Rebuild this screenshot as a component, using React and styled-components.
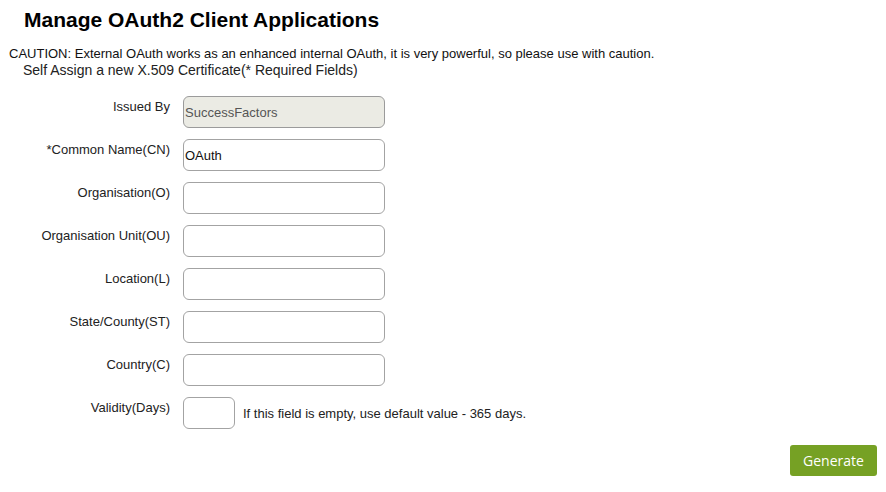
import React from "react";
import styled, { createGlobalStyle } from "styled-components";

const Global = createGlobalStyle`
  html, body { margin: 0; padding: 0; background: #fff; }
  body { font-family: Arial, "Liberation Sans", sans-serif; color: #222; }
`;

const Page = styled.div`
  width: 886px;
  height: 492px;
  box-sizing: border-box;
  padding-top: 8px;
  display: flex;
  flex-direction: column;
`;

const Title = styled.h1`
  margin: 0 0 14px 24px;
  font-size: 21px;
  line-height: 24px;
  font-weight: bold;
  color: #000;
`;

const Caution = styled.div`
  margin-left: 9px;
  font-size: 13px;
  line-height: 15px;
  color: #111;
`;

const Subtitle = styled.div`
  margin: 1px 0 0 23px;
  font-size: 14px;
  line-height: 16px;
  color: #222;
`;

const Form = styled.div`
  margin-top: 18px;
  display: grid;
  grid-template-columns: 170px auto;
  column-gap: 13px;
  row-gap: 11px;
  align-items: start;
`;

const Label = styled.div`
  text-align: right;
  font-size: 13px;
  line-height: 15px;
  padding-top: 3px;
  color: #222;
`;

const FieldCell = styled.div`
  display: flex;
  align-items: center;
  gap: 8px;
`;

const Input = styled.div`
  box-sizing: border-box;
  width: ${(p) => (p.$small ? "52px" : "202px")};
  height: 32px;
  border: 1px solid ${(p) => (p.$disabled ? "#9b9b9b" : "#a3a3a3")};
  border-radius: 6px;
  background: ${(p) => (p.$disabled ? "#ebebe4" : "#fff")};
  color: ${(p) => (p.$disabled ? "#555" : "#111")};
  font-size: 13px;
  line-height: 30px;
  padding: 1px 1px 0;
`;

const Hint = styled.span`
  font-size: 13px;
  color: #222;
  padding-top: 1px;
`;

const Footer = styled.div`
  display: flex;
  justify-content: flex-end;
  padding-right: 9px;
  margin-top: 16px;
`;

const Button = styled.button`
  width: 87px;
  height: 31px;
  border: none;
  border-radius: 3px;
  background: #76a124;
  color: #fff;
  font-family: "Open Sans", sans-serif;
  font-size: 14px;
  padding: 0;
`;

const rows = [
  { label: "Issued By", value: "SuccessFactors", disabled: true },
  { label: "*Common Name(CN)", value: "OAuth" },
  { label: "Organisation(O)", value: "" },
  { label: "Organisation Unit(OU)", value: "" },
  { label: "Location(L)", value: "" },
  { label: "State/County(ST)", value: "" },
  { label: "Country(C)", value: "" },
];

export default function App() {
  return (
    <Page>
      <Global />
      <Title>Manage OAuth2 Client Applications</Title>
      <Caution>
        CAUTION: External OAuth works as an enhanced internal OAuth, it is very powerful, so please use with caution.
      </Caution>
      <Subtitle>Self Assign a new X.509 Certificate(* Required Fields)</Subtitle>
      <Form>
        {rows.map((r) => (
          <React.Fragment key={r.label}>
            <Label>{r.label}</Label>
            <FieldCell>
              <Input $disabled={r.disabled}>{r.value}</Input>
            </FieldCell>
          </React.Fragment>
        ))}
        <Label>Validity(Days)</Label>
        <FieldCell>
          <Input $small />
          <Hint>If this field is empty, use default value - 365 days.</Hint>
        </FieldCell>
      </Form>
      <Footer>
        <Button>Generate</Button>
      </Footer>
    </Page>
  );
}
